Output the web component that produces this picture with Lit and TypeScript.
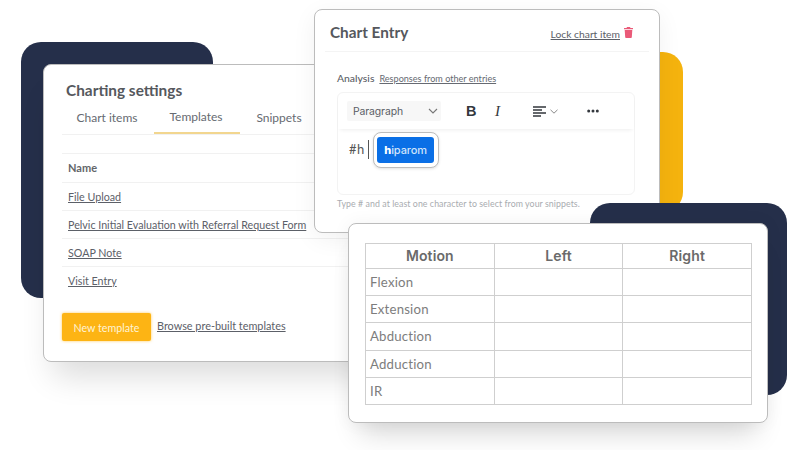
import { LitElement, html, css } from "lit";
import { customElement } from "lit/decorators.js";

const ROWS = ["Flexion", "Extension", "Abduction", "Adduction", "IR"];
const TEMPLATES = ["File Upload", "Pelvic Initial Evaluation with Referral Request Form", "SOAP Note", "Visit Entry"];

@customElement("app-root")
export class AppRoot extends LitElement {
  static styles = css`
    :host {
      display: block;
      width: 800px;
      height: 450px;
      position: relative;
      overflow: hidden;
      background: #fff;
      font-family: "Lato", "Open Sans", sans-serif;
      color: #4a4f57;
    }
    .shape { position: absolute; border-radius: 20px; }
    .navy-l { left: 21px; top: 42px; width: 192px; height: 256px; background: #252f4a; }
    .amber { left: 600px; top: 52px; width: 83px; height: 160px; background: #f5b30e; }
    .navy-r { left: 590px; top: 203px; width: 197px; height: 192px; background: #252f4a; }

    .card {
      position: absolute;
      box-sizing: border-box;
      background: #fff;
      border: 1px solid #bcbcbc;
      border-radius: 8px;
    }
    .settings {
      left: 43px; top: 64px; width: 340px; height: 298px;
      padding: 15px 0 0 18px;
      box-shadow: 0 24px 30px -10px rgba(0,0,0,.14);
    }
    .settings h2 {
      margin: 0 0 0 4px;
      font-size: 15.4px; line-height: 20px; font-weight: 700; color: #55585d;
    }
    .tabs {
      display: flex;
      margin-top: 3px;
      height: 31px;
      border-bottom: 1px solid #f1f1f1;
      font-size: 12px;
      color: #666a71;
    }
    .tab { display: flex; align-items: center; justify-content: center; height: 31px; box-sizing: border-box; padding: 0 2px 2px 0; }
    .tab.a { width: 92px; }
    .tab.b { width: 86px; border-bottom: 2px solid #f2d68f; }
    .tab.c { width: 80px; }
    .list { margin-top: 18px; border-top: 1px solid #f1f1f1; }
    .row {
      display: flex; align-items: center;
      height: 28px; box-sizing: border-box;
      padding-left: 6px;
      border-bottom: 1px solid #f1f1f1;
      font-size: 10.7px;
      color: #5c6068;
    }
    .row:last-child { border-bottom-color: transparent; }
    .row.head { height: 29px; padding-bottom: 2px; font-weight: 700; font-size: 11px; color: #64666a; }
    a { color: #5c6068; text-decoration: underline; text-underline-offset: 1px; }
    .actions { display: flex; align-items: flex-start; gap: 6px; margin-top: 18px; }
    .btn {
      width: 89px; height: 28px;
      display: flex; align-items: center; justify-content: center;
      background: #fdb414; color: #fff3d4;
      border-radius: 2px;
      font-size: 10.7px;
      box-shadow: 0 0 3px rgba(253,180,20,.7);
    }
    .actions a { font-size: 10.85px; margin-top: 6px; }

    .entry {
      left: 314px; top: 9px; width: 346px; height: 224px;
      box-shadow: 0 6px 24px rgba(0,0,0,.06);
      display: flex; flex-direction: column;
    }
    .entry-head {
      display: flex; align-items: center;
      margin: 0 10px;
      height: 42px;
      padding: 3px 5px 0;
      border-bottom: 1px solid #f4f4f4;
      box-sizing: border-box;
    }
    .entry-head h2 { margin: 0; font-size: 15.3px; font-weight: 700; color: #55585d; flex: 1; }
    .lock { font-size: 10.3px; margin-top: 3px; margin-right: 4px; }
    .trash { display: block; margin-right: 11px; margin-top: 1px; }
    .entry-body { padding: 20px 0 0 22px; }
    .labels { display: flex; align-items: baseline; gap: 5px; height: 13px; }
    .labels b { font-weight: 500; font-size: 10.4px; color: #5c6066; }
    .labels a { font-size: 9.1px; color: #666a72; }
    .editor {
      margin-top: 7px;
      width: 298px; height: 103px;
      box-sizing: border-box;
      border: 1px solid #f3f3f3;
      border-radius: 6px;
    }
    .toolbar {
      display: flex; align-items: center;
      height: 36px;
      padding-left: 9px;
      box-shadow: 0 3px 4px -2px rgba(0,0,0,.07);
    }
    .select {
      width: 94px; height: 20px; box-sizing: border-box;
      display: flex; align-items: center; justify-content: space-between;
      padding: 0 3px 0 6px;
      background: #f7f7f7;
      font-size: 10.4px; color: #5a5e66;
      border-radius: 2px;
      font-family: "Inter", sans-serif;
      letter-spacing: -.1px;
    }
    .bold { margin-left: 25px; font: 700 14.5px "Liberation Sans", sans-serif; color: #33373d; width: 29px; }
    .ital { font: italic 400 15px "Liberation Serif", serif; color: #33373d; width: 38px; }
    .tool-icon { display: block; }
    .chev { margin-left: 4px; margin-right: 29px; }
    .body { display: flex; align-items: flex-start; padding: 3px 0 0 11px; }
    .hash { margin-top: 9px; font-size: 13px; color: #555; letter-spacing: .4px; line-height: 16px; }
    .caret { width: 1px; height: 19px; background: #555; margin: 8px 0 0 3px; }
    .popup {
      margin-left: 4px;
      width: 66px; height: 36px; box-sizing: border-box;
      display: flex; align-items: center; justify-content: center;
      border: 1px solid #bdbdbd; border-radius: 8px;
      box-shadow: 0 1px 3px rgba(0,0,0,.12);
      background: #fff;
    }
    .chip {
      width: 57px; height: 26px;
      display: flex; align-items: center; justify-content: center;
      background: #0a6fe6; color: #cfe3fb;
      border-radius: 3px;
      font: 500 11px "Inter", sans-serif;
      letter-spacing: -.1px;
    }
    .chip b { color: #fff; font-weight: 800; }
    .help { margin: 3px 0 0; font-size: 8.8px; line-height: 12px; color: #a9acb0; white-space: nowrap; letter-spacing: .06px; }

    .table-card {
      left: 348px; top: 223px; width: 420px; height: 200px;
      padding: 19px 15px 0 16px;
      box-shadow: 0 22px 26px -12px rgba(0,0,0,.16), 0 0 18px rgba(0,0,0,.05);
    }
    table {
      border-collapse: collapse;
      width: 387px;
      table-layout: fixed;
    }
    th, td { border: 1px solid #cfcfcf; padding: 0; }
    th {
      height: 25px;
      padding-bottom: 1px;
      box-sizing: border-box;
      font: 600 14px "Inter", sans-serif;
      color: #6a6a6a;
      letter-spacing: .1px;
    }
    td {
      height: 26.2px;
      padding-left: 4px;
      font-size: 13.2px;
      color: #7d7d7d;
      letter-spacing: .2px;
    }
  `;

  render() {
    return html`
      <div class="shape navy-l"></div>
      <div class="shape amber"></div>
      <div class="card settings">
        <h2>Charting settings</h2>
        <div class="tabs">
          <div class="tab a">Chart items</div>
          <div class="tab b">Templates</div>
          <div class="tab c">Snippets</div>
        </div>
        <div class="list">
          <div class="row head">Name</div>
          ${TEMPLATES.map((t) => html`<div class="row"><a>${t}</a></div>`)}
        </div>
        <div class="actions">
          <div class="btn">New template</div>
          <a>Browse pre-built templates</a>
        </div>
      </div>
      <div class="card entry">
        <div class="entry-head">
          <h2>Chart Entry</h2>
          <a class="lock">Lock chart item</a>
          <svg class="trash" width="9" height="11" viewBox="0 0 9 11">
            <path fill="#ea5a78" d="M3 0h3l.5 1H9v1.2H0V1h2.5zM.7 3h7.6l-.5 7.2c0 .5-.4.8-.8.8H2c-.4 0-.8-.3-.8-.8z"/>
          </svg>
        </div>
        <div class="entry-body">
          <div class="labels"><b>Analysis</b><a>Responses from other entries</a></div>
          <div class="editor">
            <div class="toolbar">
              <div class="select">Paragraph
                <svg width="10" height="6" viewBox="0 0 10 6"><path d="M1 1l4 4 4-4" fill="none" stroke="#777" stroke-width="1.1"/></svg>
              </div>
              <div class="bold">B</div>
              <div class="ital">I</div>
              <svg class="tool-icon" width="13" height="11" viewBox="0 0 13 11">
                <path d="M0 1h13M0 4h9M0 7h13M0 10h8" stroke="#33373d" stroke-width="1.3"/>
              </svg>
              <svg class="tool-icon chev" width="8" height="5" viewBox="0 0 8 5"><path d="M.5.8L4 4.2 7.5.8" fill="none" stroke="#888" stroke-width="1"/></svg>
              <svg class="tool-icon" width="12" height="4" viewBox="0 0 12 4">
                <circle cx="1.7" cy="2" r="1.5" fill="#33373d"/><circle cx="6" cy="2" r="1.5" fill="#33373d"/><circle cx="10.3" cy="2" r="1.5" fill="#33373d"/>
              </svg>
            </div>
            <div class="body">
              <div class="hash">#h</div>
              <div class="caret"></div>
              <div class="popup"><div class="chip"><b>h</b>iparom</div></div>
            </div>
          </div>
          <p class="help">Type # and at least one character to select from your snippets.</p>
        </div>
      </div>
      <div class="shape navy-r"></div>
      <div class="card table-card">
        <table>
          <thead><tr><th>Motion</th><th>Left</th><th>Right</th></tr></thead>
          <tbody>
            ${ROWS.map((r) => html`<tr><td>${r}</td><td></td><td></td></tr>`)}
          </tbody>
        </table>
      </div>
    `;
  }
}
